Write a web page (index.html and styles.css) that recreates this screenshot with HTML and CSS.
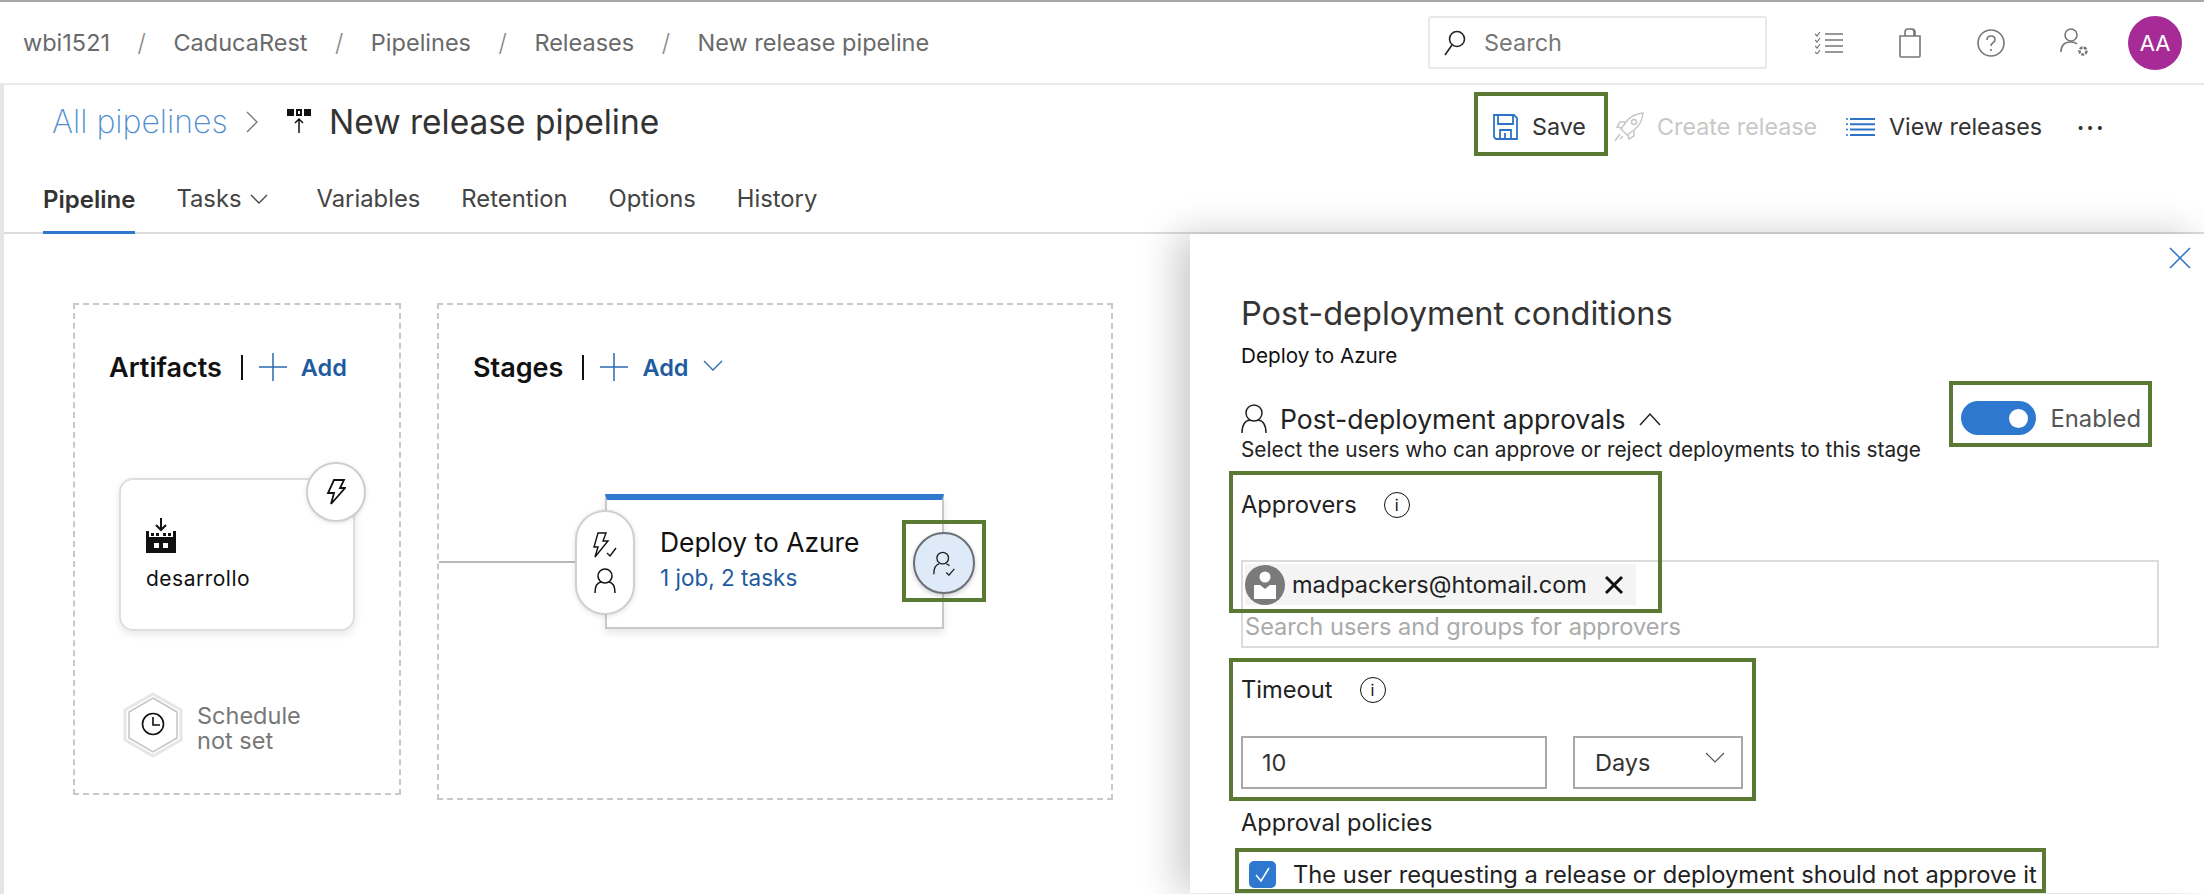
FILE: index.html

```html
<!DOCTYPE html>
<html lang="en">
<head>
  <meta charset="UTF-8" />
  <title>New release pipeline - Pipelines</title>
  <link rel="stylesheet" href="styles.css">
</head>
<body>
  <header class="topbar">
    <nav class="crumbs">
      <span>wbi1521</span><i>/</i>
      <span>CaducaRest</span><i>/</i>
      <span>Pipelines</span><i>/</i>
      <span>Releases</span><i>/</i>
      <span>New release pipeline</span>
    </nav>
    <div class="search">
      <svg width="26" height="28" viewBox="0 0 26 28" fill="none" stroke="#222" stroke-width="1.6"><circle cx="15" cy="10" r="7.5"/><path d="M10 16 3 26"/></svg>
      <span>Search</span>
    </div>
    <div class="top-icons">
      <svg class="ic-list" width="28" height="22" viewBox="0 0 28 22" fill="none" stroke="#777" stroke-width="1.7"><path d="M10 2h18M10 8h18M10 14h18M10 20h18"/><path d="m0 2 2 2 3-4M0 8l2 2 3-4M0 14l2 2 3-4M0 20l2 2 3-4" stroke-width="1.2"/></svg>
      <svg class="ic-bag" width="22" height="30" viewBox="0 0 22 30" fill="none" stroke="#777" stroke-width="1.6"><path d="M1 8h20v20a1 1 0 0 1-1 1H2a1 1 0 0 1-1-1z"/><path d="M6 8V4q0-3 3-3h4q3 0 3 3v4M12 1q3 0 3 3v4"/></svg>
      <svg class="ic-help" width="28" height="28" viewBox="0 0 28 28" fill="none" stroke="#777" stroke-width="1.6"><circle cx="14" cy="14" r="13"/><path d="M10 11q0-4 4-4t4 3.500q0 2-2 3.200t-2 3.300"/><path d="M14 20v2"/></svg>
      <svg class="ic-user" width="30" height="30" viewBox="0 0 30 30" fill="none" stroke="#777" stroke-width="1.6"><circle cx="11" cy="7" r="6"/><path d="M1 24q0-10 10-10 4 0 6 2"/><circle cx="23" cy="23" r="3.500" stroke-width="2.500" stroke-dasharray="3 1.200"/></svg>
      <div class="avatar">AA</div>
    </div>
  </header>

  <div class="page">
    <div class="titlebar">
      <div class="title-left">
        <a class="all">All pipelines</a>
        <svg class="sep" width="12" height="22" viewBox="0 0 12 22" fill="none" stroke="#777" stroke-width="1.300"><path d="m1 1 10 10L1 21"/></svg>
        <svg class="rel-icon" width="24" height="24" viewBox="0 0 24 24"><path d="M0 0h7v7H0zM17 0h7v7h-7zM9 0h6v7H9zM11 2v3h2V2z" fill="#111" fill-rule="evenodd"/><path d="M12 24V10M8 14l4-4 4 4" fill="none" stroke="#111" stroke-width="1.500"/></svg>
        <h1>New release pipeline</h1>
      </div>
      <div class="actions">
        <button class="act save">
          <svg width="25" height="26" viewBox="0 0 25 26" fill="none" stroke="#2f74c4" stroke-width="1.800"><path d="M1 1h20l3 3v21H3l-2-2z"/><path d="M5 1v9h15V1M7 25v-9h11v9M12 19v6"/></svg>
          Save
        </button>
        <button class="act off">
          <svg width="30" height="30" viewBox="0 0 30 30" fill="none" stroke="#c8c8c8" stroke-width="1.500"><path d="M29 1q-11 1-17 9l-5 7 6 6 7-5q8-6 9-17z"/><path d="M12 10H6l-3 5 5 1M20 18v6l-5 3-1-5"/><circle cx="20" cy="10" r="2.500"/><path d="M6 22l-5 7M9 24l-3 3"/></svg>
          Create release
        </button>
        <button class="act">
          <svg width="29" height="18" viewBox="0 0 29 18" fill="none" stroke="#2f74c4" stroke-width="2"><path d="M4 1h25M4 6.300h25M4 11.600h25M4 17h25"/><path d="M0 1h2M0 6.300h2M0 11.600h2M0 17h2" stroke-width="1.500"/></svg>
          View releases
        </button>
        <span class="more">&middot;&middot;&middot;</span>
      </div>
    </div>

    <div class="tabs">
      <a class="tab on">Pipeline</a>
      <a class="tab tasks">Tasks <svg width="18" height="10" viewBox="0 0 18 10" fill="none" stroke="#444" stroke-width="1.300"><path d="m1 1 8 8 8-8"/></svg></a>
      <a class="tab">Variables</a>
      <a class="tab">Retention</a>
      <a class="tab">Options</a>
      <a class="tab">History</a>
    </div>

    <div class="main">
      <div class="canvas">
        <section class="box artifacts">
          <div class="box-head">
            <h2>Artifacts</h2><span class="bar"></span>
            <svg class="plus" width="30" height="30" viewBox="0 0 30 30" stroke="#2a6ab0" stroke-width="1.500"><path d="M15 1v28M1 15h28"/></svg>
            <a class="add">Add</a>
          </div>
          <div class="artifact">
            <div class="trigger">
              <svg width="20" height="26" viewBox="0 0 20 26" fill="none" stroke="#111" stroke-width="1.800"><path d="M8 1h10l-4 8h5L5 25l3-11H2z"/></svg>
            </div>
            <svg class="factory" width="30" height="35" viewBox="0 0 30 35"><path d="M15 0v11M10 7l5 5 5-5" fill="none" stroke="#111" stroke-width="2"/><path d="M0 13h3v6h24v-6h3v22H0zM5 15h3v3H5zM10 15h3v3h-3zM17 15h3v3h-3zM22 15h3v3h-3zM8 25h5v5H8zM17 25h5v5h-5z" fill="#111" fill-rule="evenodd"/></svg>
            <div class="artifact-name">desarrollo</div>
          </div>
          <div class="schedule">
            <svg width="60" height="66" viewBox="0 0 60 66"><path d="M30 2 58 18v30L30 64 2 48V18z" fill="#fff" stroke="#e6e6e6" stroke-width="3"/><path d="M30 6 54 20v26L30 60 6 46V20z" fill="#fff" stroke="#c4c4c4" stroke-width="1.500"/><circle cx="30" cy="32" r="10.500" fill="none" stroke="#111" stroke-width="1.600"/><path d="M30 25v8h7" fill="none" stroke="#111" stroke-width="1.600"/></svg>
            <span>Schedule<br>not set</span>
          </div>
        </section>

        <section class="box stages">
          <div class="box-head">
            <h2>Stages</h2><span class="bar"></span>
            <svg class="plus" width="30" height="30" viewBox="0 0 30 30" stroke="#2a6ab0" stroke-width="1.500"><path d="M15 1v28M1 15h28"/></svg>
            <a class="add">Add</a>
            <svg class="add-chev" width="20" height="12" viewBox="0 0 20 12" fill="none" stroke="#2a6ab0" stroke-width="1.300"><path d="m1 1 9 9 9-9"/></svg>
          </div>
          <div class="stage-row">
            <div class="wire"></div>
            <div class="stage">
              <div class="pill">
                <svg width="24" height="26" viewBox="0 0 24 26" fill="none" stroke="#111" stroke-width="1.400"><path d="M5 1h8l-3 8h5L2 25l3-10H1zM14 21l3 3 6-8"/></svg>
                <svg width="22" height="26" viewBox="0 0 22 26" fill="none" stroke="#111" stroke-width="1.500"><circle cx="11" cy="8" r="7"/><path d="M1 25q0-10 6-11M21 25q0-10-6-11"/></svg>
              </div>
              <div class="stage-name">Deploy to Azure</div>
              <div class="stage-sub">1 job, 2 tasks</div>
              <div class="approver">
                <svg width="25" height="25" viewBox="0 0 26 28" fill="none" stroke="#222" stroke-width="1.500"><circle cx="11" cy="8" r="6.500"/><path d="M1 26q0-10 6-11.500M15 14.500q2 .5 3.500 2M15 24l3 3 6-7"/></svg>
              </div>
            </div>
          </div>
        </section>
      </div>

      <aside class="panel">
        <svg class="close" width="22" height="22" viewBox="0 0 22 22" stroke="#2f74c4" stroke-width="1.500"><path d="m1 1 20 20M21 1 1 21"/></svg>
        <h2 class="panel-title">Post-deployment conditions</h2>
        <div class="panel-sub">Deploy to Azure</div>

        <div class="section-head">
          <div>
            <div class="section-title">
              <svg width="26" height="30" viewBox="0 0 26 30" fill="none" stroke="#222" stroke-width="1.500"><circle cx="13" cy="9" r="8"/><path d="M1 29q0-12 8-13M25 29q0-12-8-13"/></svg>
              <span>Post-deployment approvals</span>
              <svg width="22" height="14" viewBox="0 0 22 14" fill="none" stroke="#222" stroke-width="1.500"><path d="m1 13 10-11 10 11"/></svg>
            </div>
            <div class="section-desc">Select the users who can approve or reject deployments to this stage</div>
          </div>
          <div class="toggle-wrap">
            <span class="toggle"><span class="knob"></span></span>
            <span class="toggle-text">Enabled</span>
          </div>
        </div>

        <div class="label approvers-label">Approvers <span class="info">i</span></div>
        <div class="picker">
          <div class="chip">
            <svg width="40" height="40" viewBox="0 0 40 40"><circle cx="20" cy="20" r="20" fill="#7a7a7a"/><circle cx="20" cy="12" r="5.500" fill="#fff"/><path d="M9 20h6l5 4 5-4h6v14H9z" fill="#fff"/></svg>
            <span class="chip-mail">madpackers@htomail.com</span>
            <svg class="chip-x" width="20" height="20" viewBox="0 0 20 20" stroke="#111" stroke-width="3"><path d="m2 2 16 16M18 2 2 18"/></svg>
          </div>
          <div class="placeholder">Search users and groups for approvers</div>
        </div>

        <div class="label timeout-label">Timeout <span class="info">i</span></div>
        <div class="timeout">
          <div class="num">10</div>
          <div class="unit">Days <svg width="20" height="11" viewBox="0 0 20 11" fill="none" stroke="#555" stroke-width="1.200"><path d="m1 1 9 9 9-9"/></svg></div>
        </div>

        <div class="policies">Approval policies</div>
        <div class="check-row">
          <span class="check"><svg width="17" height="17" viewBox="0 0 17 17" fill="none" stroke="#fff" stroke-width="1.500"><path d="m2 9 5 6 8-13"/></svg></span>
          <span>The user requesting a release or deployment should not approve it</span>
        </div>
      </aside>
    </div>
  </div>

  <!-- green call-outs drawn on top of the screenshot -->
  <div class="mark m-save"></div>
  <div class="mark m-approver"></div>
  <div class="mark m-toggle"></div>
  <div class="mark m-approvers"></div>
  <div class="mark m-timeout"></div>
  <div class="mark m-check"></div>
</body>
</html>
```

FILE: styles.css

```css
* { box-sizing: border-box; }
body { margin: 0; width: 2204px; height: 894px; overflow: hidden; position: relative; background: #fff; color: #333; font-family: Inter, "Noto Sans", sans-serif; }
h1, h2 { margin: 0; font-weight: 400; }
svg { display: block; flex: none; }

.topbar { height: 85px; display: flex; align-items: center; border-top: 2px solid #a8a8a8; border-bottom: 2px solid #e8e8e8; padding-left: 23px; }
.crumbs { display: flex; align-items: center; font-size: 23.500px; color: #6a6a6a; width: 1405px; }
.crumbs i { font-style: normal; font-weight: 300; color: #888; margin: 0 27.500px; font-size: 24px; }
.search { width: 339px; height: 53px; border: 2px solid #e8e8e8; border-radius: 3px; display: flex; align-items: center; gap: 16px; padding-left: 12px; font-size: 23.500px; color: #777; }
.top-icons { display: flex; align-items: center; margin-left: 48px; }
.ic-bag { margin-left: 56px; }
.ic-help { margin-left: 56px; }
.ic-user { margin-left: 55px; }
.avatar { width: 54px; height: 54px; margin-left: 38px; border-radius: 50%; background: #a62b97; color: #fff; font-size: 22px; display: flex; align-items: center; justify-content: center; }

.page { border-left: 4px solid #e6e6e6; height: 809px; }
.titlebar { height: 79px; display: flex; align-items: center; padding-left: 48px; padding-top: 4px; }
.title-left { display: flex; align-items: center; margin-bottom: 10px; }
.all { font-size: 32px; font-weight: 200; color: #4f8fd0; width: 194px; }
.sep { margin-right: 29px; }
.rel-icon { margin-right: 18px; margin-top: -2px; }
h1 { font-size: 33.500px; color: #333; width: 1144px; }
.actions { display: flex; align-items: center; }
.act { border: 0; background: none; padding: 0; font: inherit; font-size: 23.300px; color: #333; display: flex; align-items: center; gap: 14px; }
.save { width: 135px; padding-left: 20px; }
.off { color: #c8c8c8; width: 238px; padding-left: 6px; gap: 13px; }
.more { font-size: 30px; margin-left: 34px; letter-spacing: 1px; color: #333; }

.tabs { height: 70px; display: flex; align-items: flex-end; border-bottom: 2px solid #dcdcdc; padding-left: 39px; gap: 41px; font-size: 23.800px; color: #444; }
.tab { display: flex; align-items: center; gap: 8px; height: 54px; padding-bottom: 13px; }
.tab.on { font-size: 24px; font-weight: 600; color: #333; border-bottom: 3px solid #2f78d0; padding-bottom: 10px; margin-bottom: -2px; height: 56px; }
.tab.tasks { margin-right: 8px; }

.main { display: flex; height: 659px; }
.canvas { flex: 1; display: flex; align-items: flex-start; gap: 36px; padding: 69px 0 0 69px; }
.box { border: 2px dashed #c8c8c8; }
.artifacts { width: 328px; height: 492px; padding: 38px 0 0 34px; }
.stages { width: 676px; height: 497px; padding-top: 38px; }
.box-head { display: flex; align-items: center; height: 48px; }
.stages .box-head { padding-left: 34px; }
.box-head h2 { font-size: 27px; font-weight: 600; color: #111; }
.bar { width: 2px; height: 25px; background: #111; margin-left: 19px; }
.plus { margin-left: 15px; }
.add { font-size: 23.500px; font-weight: 600; color: #1f5c9f; margin-left: 13px; }
.add-chev { margin-left: 14px; margin-top: -3px; }

.artifact { position: relative; width: 236px; height: 153px; margin: 87px 0 0 10px; border: 2px solid #dedede; border-radius: 14px; box-shadow: 0 3px 8px rgba(0,0,0,.1); padding: 38px 0 0 25px; }
.trigger { position: absolute; right: -13px; top: -18px; width: 60px; height: 60px; border-radius: 50%; background: #fff; border: 2px solid #cfcfcf; box-shadow: 0 1px 4px rgba(0,0,0,.12); display: flex; align-items: center; justify-content: center; }
.artifact-name { font-size: 21px; letter-spacing: .5px; color: #111; margin-top: 13px; }
.schedule { display: flex; align-items: center; gap: 14px; margin: 61px 0 0 14px; font-size: 23.500px; line-height: 25px; color: #777; }
.schedule span { margin-top: 6px; }

.stage-row { display: flex; align-items: center; margin-top: 103px; }
.wire { width: 166px; height: 2px; background: #b8b8b8; }
.stage { position: relative; width: 339px; height: 135px; border: 2px solid #c8c8c8; border-top: 6px solid #2f78d0; box-shadow: 0 4px 8px rgba(0,0,0,.1); padding: 26px 0 0 53px; }
.pill { position: absolute; left: -32px; top: 10px; width: 60px; height: 105px; border: 2px solid #d0d0d0; border-radius: 30px; background: #fff; box-shadow: 0 1px 5px rgba(0,0,0,.12); display: flex; flex-direction: column; align-items: center; justify-content: center; gap: 10px; }
.stage-name { font-size: 26.400px; color: #111; }
.stage-sub { font-size: 22.500px; color: #1f5c9f; margin-top: 6px; }
.approver { position: absolute; right: -33px; top: 32px; width: 62px; height: 62px; border-radius: 50%; background: #deeaf7; border: 2px solid #6a7078; box-shadow: 0 2px 5px rgba(0,0,0,.2); display: flex; align-items: center; justify-content: center; }

.panel { position: relative; width: 1014px; background: #fff; box-shadow: -14px 0 36px rgba(0,0,0,.2); padding: 60px 0 0 51px; }
.close { position: absolute; right: 13px; top: 13px; }
.panel-title { font-size: 32.500px; color: #333; line-height: 40px; }
.panel-sub { font-size: 20.700px; color: #111; margin-top: 9px; }
.section-head { display: flex; justify-content: space-between; align-items: flex-start; margin-top: 33px; padding-right: 63px; }
.section-title { display: flex; align-items: center; gap: 13px; font-size: 26.600px; color: #222; height: 36px; }
.section-desc { font-size: 20.800px; color: #222; margin-top: 0; }
.toggle-wrap { display: flex; align-items: center; gap: 14px; margin-top: 0; }
.toggle { width: 75px; height: 34px; border-radius: 17px; background: #2f78d0; display: flex; align-items: center; justify-content: flex-end; padding-right: 8px; }
.knob { width: 19px; height: 19px; border-radius: 50%; background: #fff; }
.toggle-text { font-size: 23.800px; color: #555; }

.label { display: flex; align-items: center; font-size: 23.700px; color: #222; }
.info { width: 26px; height: 26px; border: 1.500px solid #111; border-radius: 50%; font-size: 16px; color: #111; display: flex; align-items: center; justify-content: center; }
.approvers-label { margin-top: 28px; gap: 27px; }
.picker { width: 918px; height: 88px; border: 2px solid #dcdcdc; margin-top: 41px; padding: 2px 0 0 2px; }
.chip { width: 391px; height: 41px; background: #f4f4f4; display: flex; align-items: center; font-size: 23.500px; color: #222; }
.chip-mail { margin-left: 7px; }
.chip-x { margin-left: 17px; }
.placeholder { font-size: 23.600px; color: #aaa; margin-top: 7px; }
.timeout-label { margin-top: 27px; gap: 27px; }
.timeout { display: flex; gap: 26px; margin-top: 32px; }
.num, .unit { height: 53px; border: 2px solid #a8a8a8; display: flex; align-items: center; font-size: 23.500px; color: #333; }
.num { width: 306px; padding-left: 19px; }
.unit { width: 170px; padding: 0 16px 0 20px; justify-content: space-between; }
.unit svg { margin-top: -10px; }
.policies { font-size: 23.600px; color: #222; margin-top: 19px; }
.check-row { display: flex; align-items: center; gap: 17px; margin: 23px 0 0 8px; font-size: 23.700px; color: #222; }
.check { width: 27px; height: 27px; border-radius: 5px; background: #2f78d0; display: flex; align-items: center; justify-content: center; }

.mark { position: absolute; border: 4px solid #5a7a33; pointer-events: none; }
.m-save { left: 1474px; top: 92px; width: 134px; height: 64px; }
.m-approver { left: 902px; top: 520px; width: 84px; height: 82px; }
.m-toggle { left: 1949px; top: 381px; width: 203px; height: 66px; }
.m-approvers { left: 1229px; top: 471px; width: 433px; height: 142px; }
.m-timeout { left: 1229px; top: 658px; width: 527px; height: 143px; }
.m-check { left: 1235px; top: 848px; width: 811px; height: 45px; }
```
